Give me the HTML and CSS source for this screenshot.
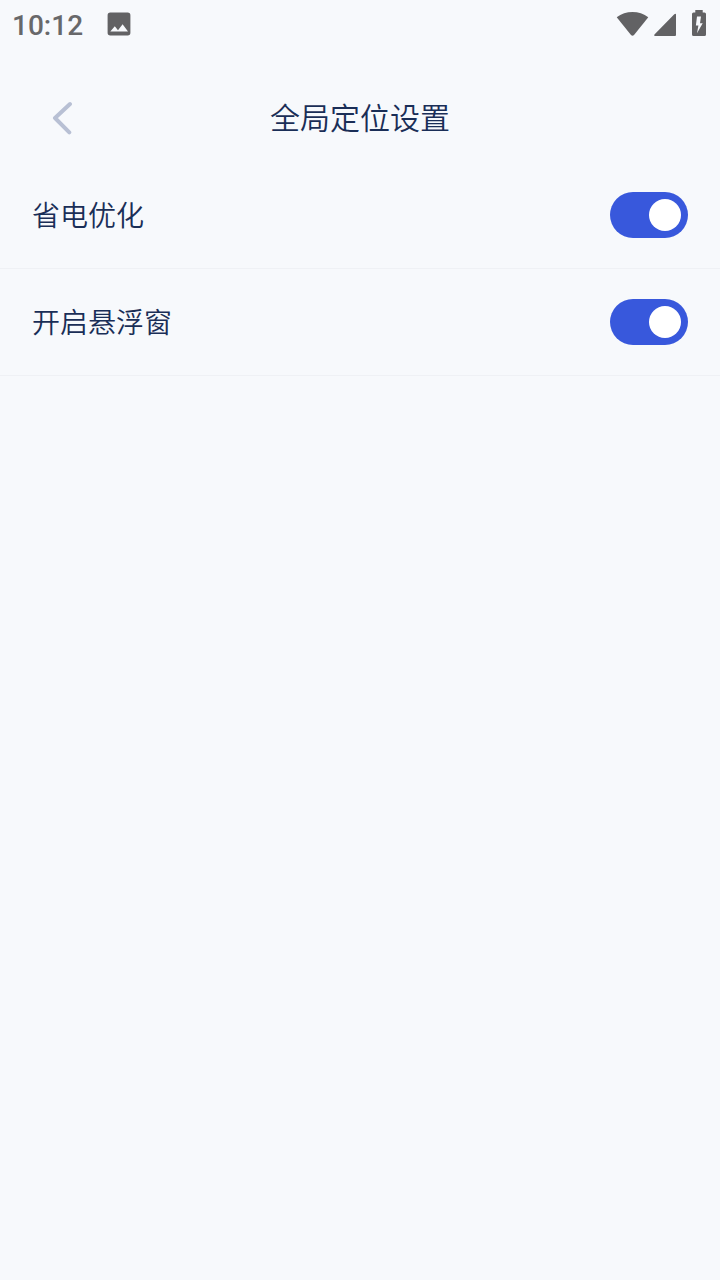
FILE: index.html
```html
<!DOCTYPE html>
<html lang="zh-CN">
<head>
<meta charset="utf-8">
<title>全局定位设置</title>
<link rel="stylesheet" href="styles.css">
</head>
<body>
<div class="status">
  <span class="time">10:12</span>
  <svg class="picture" width="24" height="24" viewBox="0 0 24 24"><path fill-rule="evenodd" d="M3.300.6h17.400a2.700 2.700 0 0 1 2.700 2.700v17.400a2.700 2.700 0 0 1-2.700 2.700H3.300A2.700 2.700 0 0 1 .6 20.700V3.300A2.700 2.700 0 0 1 3.300.6zM3.300 19.600h17.700l-5.400-7.400-4.600 6-3.200-4z"/></svg>
  <svg class="wifi" width="32" height="24" viewBox="0 0 32 24"><path d="M.2 5.300C9-1.700 23-1.700 31.800 5.300L17.500 23q-1.500 1.500-3 0L.2 5.300z"/></svg>
  <svg class="signal" width="22" height="23" viewBox="0 0 22 23"><path d="M.7 21.300L20.300 1.200Q22 0 22 1.500V22q0 1-1 1H1Q-.5 22.500.7 21.300z"/></svg>
  <svg class="battery" width="14" height="26" viewBox="0 0 14 26"><path fill-rule="evenodd" d="M3.300 0h7.400v2.500h1.800A1.500 1.500 0 0 1 14 4v20.500a1.500 1.500 0 0 1-1.500 1.500h-11A1.500 1.500 0 0 1 0 24.500V4a1.500 1.500 0 0 1 1.500-1.500h1.800zM5 6.500L3.900 15.500h2.500L5 23.300l5.700-10H8l1-6.800z"/></svg>
</div>
<header class="header">
  <svg class="back" width="20" height="34" viewBox="0 0 20 34"><path d="M18 3L3 17 17.300 31.300"/></svg>
  <h1 class="title">全局定位设置</h1>
</header>
<main>
  <div class="row"><span class="label">省电优化</span><span class="switch"></span></div>
  <div class="row"><span class="label">开启悬浮窗</span><span class="switch"></span></div>
</main>
</body>
</html>
```
FILE: styles.css
```css
* { box-sizing: border-box; }
body { margin: 0; min-height: 1280px; background: #f7f9fc; color: #1a2e57; font-family: "Noto Sans CJK SC", sans-serif; }
.status { display: flex; align-items: flex-start; height: 48px; padding: 0 14px 0 12px; fill: #626264; }
.time { width: 95px; padding-top: 2px; font: 500 28px/48px Roboto, sans-serif; color: #68686a; }
.picture { margin-top: 12px; }
.wifi { margin: 12px 6px 0 auto; transform: translateX(.5px); }
.signal { margin: 13px 16px 0 0; }
.battery { margin-top: 10px; }
.header { display: grid; grid-template-columns: 72px 1fr 72px; align-items: center; height: 114px; }
.back { margin: 25px 0 0 52px; fill: none; stroke: #b8c0d4; stroke-width: 4; stroke-linecap: round; stroke-linejoin: round; }
.title { margin: 21px 0 0; font-size: 30px; line-height: 44px; font-weight: 350; text-align: center; }
.row { display: flex; align-items: center; justify-content: space-between; height: 107px; padding: 0 32px; border-bottom: 1px solid #eff1f5; }
.label { padding-bottom: 2px; font-size: 28px; font-weight: 350; line-height: 42px; }
.switch { display: flex; align-items: center; justify-content: flex-end; width: 78px; height: 46px; padding: 7px; border-radius: 23px; background: #3858dc; }
.switch::after { content: ""; width: 32px; height: 32px; border-radius: 50%; background: #fff; }
```
